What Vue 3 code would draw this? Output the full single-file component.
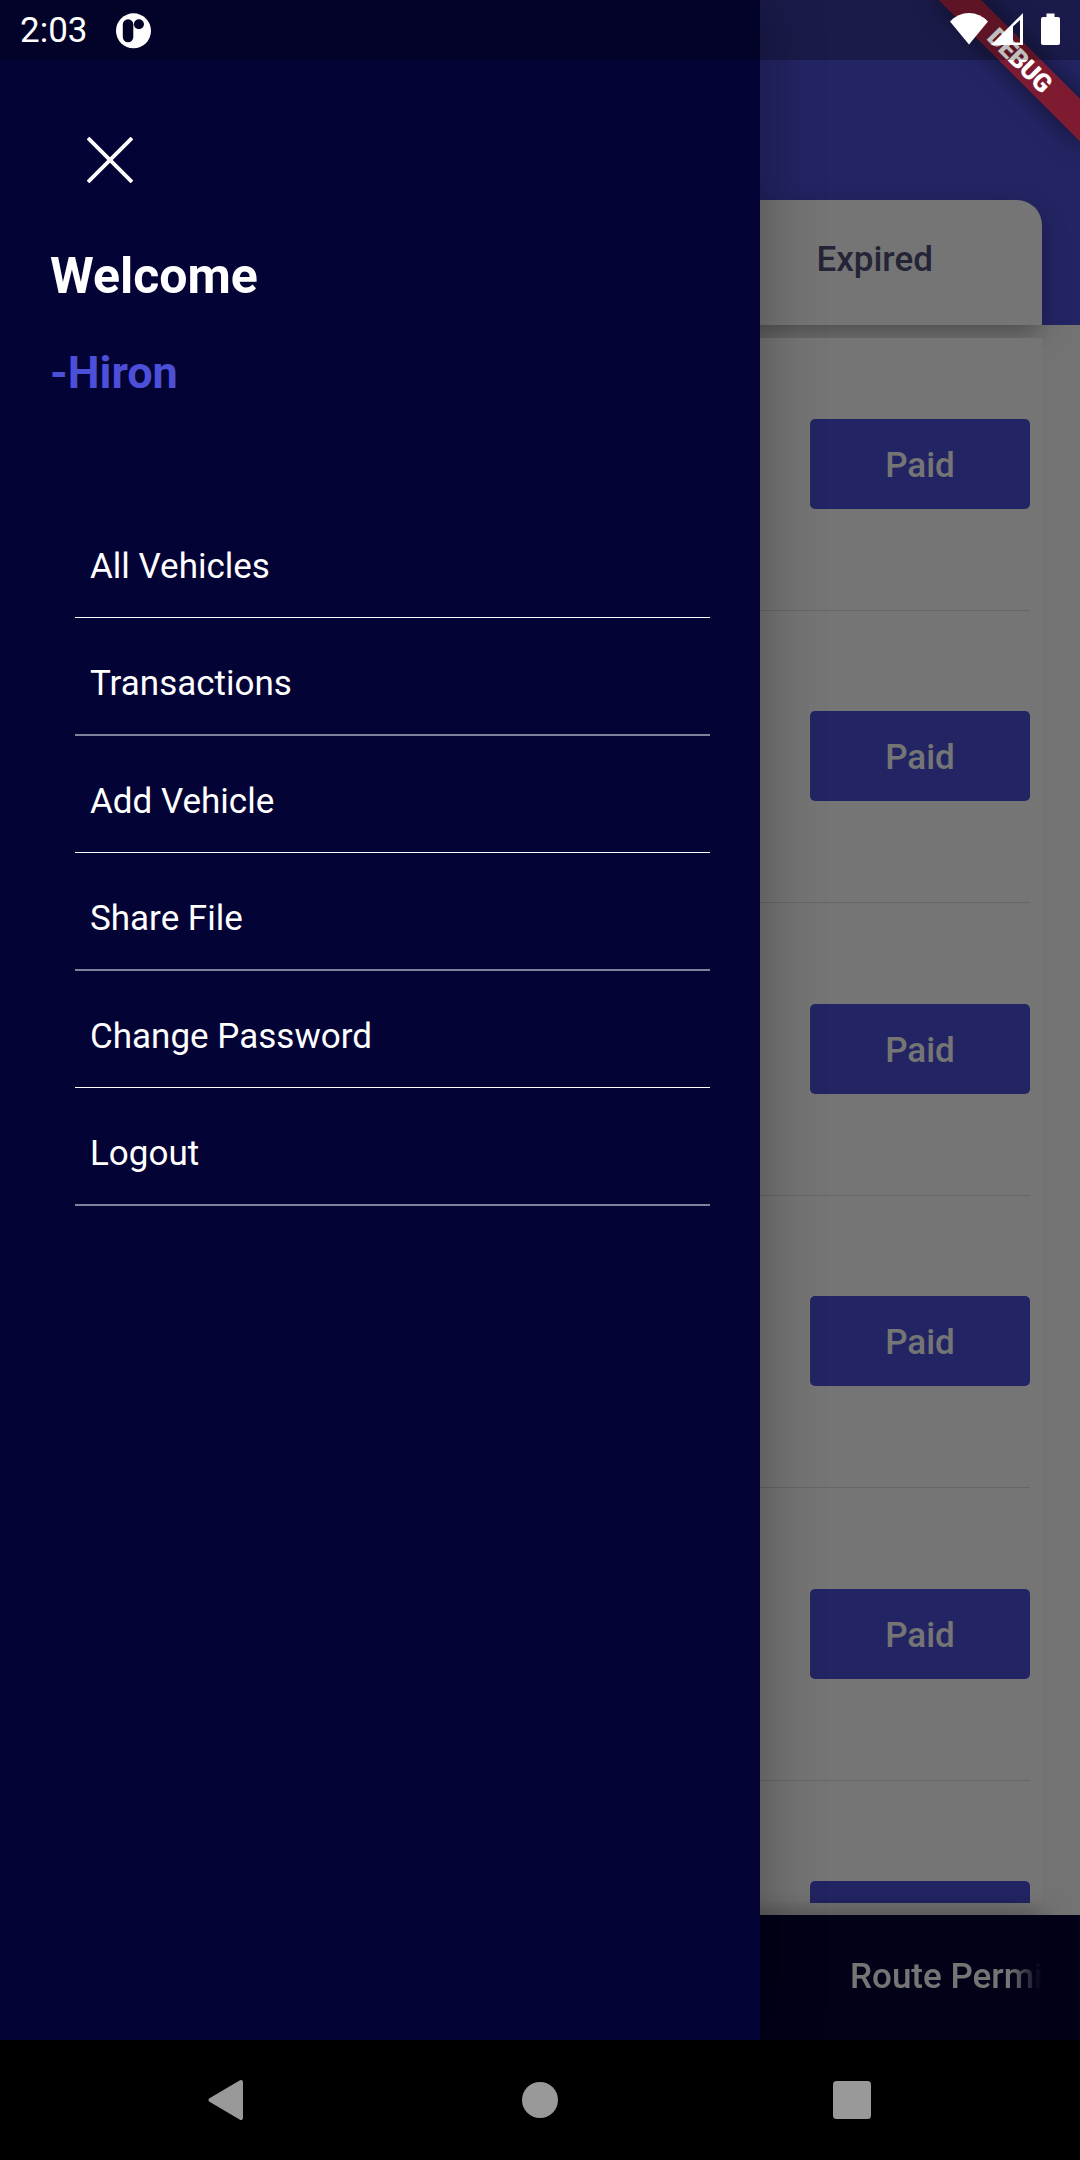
<script setup>
const menu = ['All Vehicles', 'Transactions', 'Add Vehicle', 'Share File', 'Change Password', 'Logout']
const rows = [1, 2, 3, 4, 5, 6]
</script>

<template>
  <div class="phone">
    <div class="screen">
      <header class="header">
        <div class="tabs">
          <span class="tab"></span>
          <span class="tab"></span>
          <span class="tab">Expired</span>
        </div>
      </header>
      <main class="body">
        <div class="list">
          <div v-for="r in rows" :key="r" class="row">
            <button class="paid"><template v-if="r < 6">Paid</template></button>
          </div>
        </div>
      </main>
      <footer class="footer">
        <div class="footer-tabs"><span class="route">Route Permi</span></div>
      </footer>
    </div>

    <div class="scrim"></div>

    <aside class="drawer">
      <svg class="close" width="46" height="46" viewBox="0 0 46 46">
        <path d="M1 1L45 45M45 1L1 45" stroke="#fff" stroke-width="3.800" />
      </svg>
      <h1 class="welcome">Welcome</h1>
      <p class="name">-Hiron</p>
      <nav class="menu">
        <a v-for="item in menu" :key="item" class="item">{{ item }}</a>
      </nav>
    </aside>

    <div class="ribbon"><span class="ribbon-text">DEBUG</span></div>

    <div class="status">
      <span class="time">2:03</span>
      <svg class="notif" width="36" height="37" viewBox="0 0 36 37">
        <circle cx="17.500" cy="18.800" r="17.500" fill="#fff" />
        <rect x="6.800" y="7.300" width="10.500" height="23" rx="5.200" fill="#030226" />
        <circle cx="22.900" cy="12.200" r="5" fill="#030226" />
      </svg>
      <svg class="sys" width="130" height="60" viewBox="0 0 130 60">
        <path d="M19 44.500L0 21.500Q8 13 19 13Q30 13 38 21.500Z" fill="#fff" />
        <path fill-rule="evenodd" d="M41 45L73 13V45ZM63 26.500V42.500H70V20Z" fill="#fff" />
        <path d="M96.500 13.500H104.500V17H108Q110 17 110 19V43Q110 45 108 45H93Q91 45 91 43V19Q91 17 93 17H96.500Z" fill="#fff" />
      </svg>
    </div>

    <div class="navbar">
      <svg width="36" height="40" viewBox="0 0 36 40">
        <path d="M33 2L2.500 20L33 38Z" fill="#999" stroke="#999" stroke-width="4" stroke-linejoin="round" />
      </svg>
      <svg width="38" height="38" viewBox="0 0 38 38"><circle cx="20" cy="19" r="18" fill="#999" /></svg>
      <svg width="38" height="38" viewBox="0 0 38 38"><rect width="38" height="38" rx="3.500" fill="#999" /></svg>
    </div>
  </div>
</template>

<style>
body { margin: 0; }
</style>

<style scoped>
.phone {
  position: relative;
  width: 1080px;
  height: 2160px;
  overflow: hidden;
  background: #000;
  font-family: Roboto, sans-serif;
  font-size: 35px;
}
.screen {
  display: flex;
  flex-direction: column;
  height: 2040px;
  background: #fafafa;
}
.header {
  box-sizing: border-box;
  height: 325px;
  padding: 200px 38px 0;
  background: #4c4fd8;
}
.tabs {
  display: grid;
  grid-template-columns: repeat(3, 1fr);
  height: 125px;
  background: #fff;
  border-radius: 25px 25px 0 0;
  box-shadow: 0 10px 28px -3px rgba(0, 0, 0, 0.36);
}
.tab {
  display: flex;
  align-items: center;
  justify-content: center;
  padding-bottom: 7px;
  font-weight: 500;
  color: #505078;
}
.body {
  height: 1590px;
  padding: 13px 38px 12px;
  box-sizing: border-box;
}
.list {
  position: relative;
  height: 1565px;
  overflow: hidden;
  background: #fff;
}
.row {
  display: flex;
  justify-content: flex-end;
  box-sizing: border-box;
  height: 293px;
  margin: 0 12px;
  padding-top: 100.5px;
  border-bottom: 1px solid #dfdfdf;
}
.row:nth-child(even) {
  height: 292px;
  padding-top: 100px;
}
.row:first-child {
  height: 273px;
  padding-top: 80.5px;
}
.paid {
  width: 220px;
  height: 90px;
  padding: 3px 0 0;
  border: 0;
  border-radius: 5px;
  background: #4c4fd8;
  color: #fff;
  font: 500 35px/87px Roboto, sans-serif;
}
.footer {
  position: relative;
  height: 125px;
  padding: 0 38px;
  background: #040336;
}
.footer-tabs {
  display: flex;
  align-items: center;
  justify-content: flex-end;
  box-sizing: border-box;
  height: 125px;
  padding-bottom: 2px;
  background: #040336;
  box-shadow: 0 0 26px rgba(0, 0, 0, 0.38);
  clip-path: inset(-40px -38px 0 -38px);
}
.route {
  width: 192px;
  white-space: nowrap;
  font-weight: 500;
  color: #fff;
  -webkit-mask-image: linear-gradient(90deg, #000 160px, transparent 191px);
  mask-image: linear-gradient(90deg, #000 160px, transparent 191px);
}
.scrim {
  position: absolute;
  top: 0;
  left: 0;
  width: 1080px;
  height: 2040px;
  background: rgba(0, 0, 0, 0.54);
}
.drawer {
  position: absolute;
  top: 0;
  left: 0;
  box-sizing: border-box;
  width: 760px;
  height: 2040px;
  padding: 137px 50px 0;
  background: #040336;
  color: #fff;
  box-shadow: 0 0 60px rgba(0, 0, 0, 0.32);
  clip-path: inset(0 -80px 0 0);
}
.close {
  display: block;
  margin-left: 37px;
}
.welcome {
  margin: 63px 0 0;
  font-size: 50px;
  line-height: 60px;
  font-weight: 700;
}
.name {
  margin: 40px 0 0;
  font-size: 45px;
  line-height: 54px;
  font-weight: 700;
  color: #4c4fd8;
}
.menu {
  display: flex;
  flex-direction: column;
  margin: 100px 0 0 25px;
}
.item {
  box-sizing: border-box;
  height: 118px;
  padding: 46px 15px 0;
  line-height: 42px;
  border-bottom: 1px solid #fff;
}
.item:nth-child(even) {
  padding-top: 45px;
  border-bottom: 2px solid rgba(255, 255, 255, 0.5);
}
.item:nth-child(odd):not(:first-child) {
  height: 117px;
  padding-top: 45px;
}
.ribbon {
  position: absolute;
  top: 70px;
  left: 980px;
  display: flex;
  align-items: center;
  justify-content: center;
  width: 200px;
  height: 30px;
  background: rgba(170, 23, 23, 0.68);
  box-shadow: 0 0 26px rgba(0, 0, 0, 0.5);
  transform: rotate(45deg);
  transform-origin: 100px -70px;
}
.ribbon-text {
  font-size: 25.5px;
  line-height: 30px;
  font-weight: 900;
  letter-spacing: -0.6px;
  color: #fff;
}
.status {
  position: absolute;
  top: 0;
  left: 0;
  display: flex;
  align-items: center;
  box-sizing: border-box;
  width: 1080px;
  height: 60px;
  padding-left: 20px;
  background: rgba(0, 0, 0, 0.25);
  color: #fff;
}
.time {
  width: 96px;
  font-size: 35px;
  line-height: 58px;
  padding-top: 2px;
}
.sys {
  margin-left: auto;
}
.navbar {
  display: flex;
  align-items: center;
  justify-content: space-between;
  box-sizing: border-box;
  height: 120px;
  padding: 0 209px 0 208px;
}
</style>
